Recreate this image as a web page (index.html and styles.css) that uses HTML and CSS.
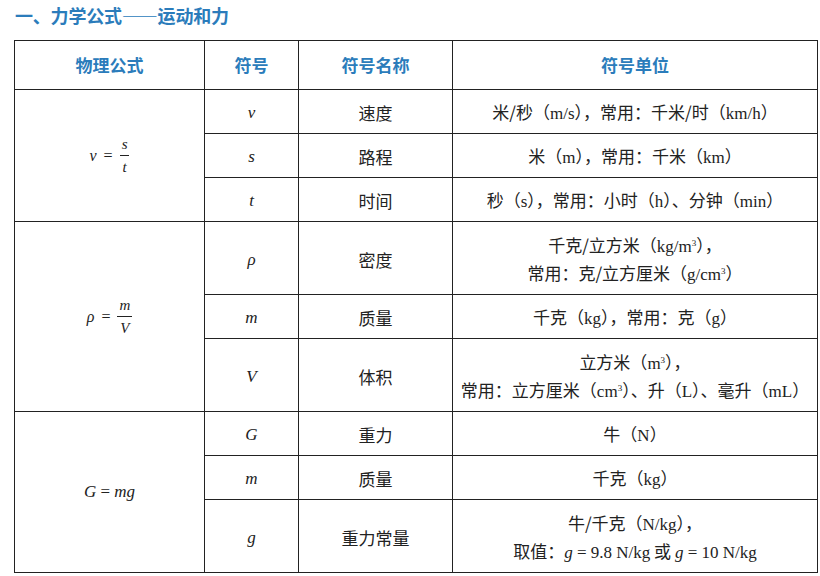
FILE: index.html
```html
<!DOCTYPE html>
<html lang="zh">
<head>
<meta charset="utf-8">
<link rel="stylesheet" href="styles.css">
</head>
<body>
<h1 class="title">一、力学公式——运动和力</h1>
<table class="tbl">
  <colgroup>
    <col class="c1"><col class="c2"><col class="c3"><col class="c4">
  </colgroup>
  <thead>
    <tr class="head">
      <th>物理公式</th><th>符号</th><th>符号名称</th><th>符号单位</th>
    </tr>
  </thead>
  <tbody>
    <tr class="r1">
      <td rowspan="3" class="formula"><span class="eq"><i>v</i><span class="op">=</span><span class="frac"><span class="num"><i>s</i></span><span class="den"><i>t</i></span></span></span></td>
      <td class="sym"><i>v</i></td><td>速度</td><td>米/秒（<span class="la">m/s</span>），常用：千米/时（<span class="la">km/h</span>）</td>
    </tr>
    <tr class="r1"><td class="sym"><i>s</i></td><td>路程</td><td>米（<span class="la">m</span>），常用：千米（<span class="la">km</span>）</td></tr>
    <tr class="r1"><td class="sym"><i>t</i></td><td>时间</td><td>秒（<span class="la">s</span>），常用：小时（<span class="la">h</span>）、分钟（<span class="la">min</span>）</td></tr>

    <tr class="r2">
      <td rowspan="3" class="formula"><span class="eq"><i>ρ</i><span class="op">=</span><span class="frac"><span class="num"><i>m</i></span><span class="den"><i>V</i></span></span></span></td>
      <td class="sym"><i>ρ</i></td><td>密度</td><td class="two">千克/立方米（<span class="la">kg/m<sup>3</sup></span>），<br>常用：克/立方厘米（<span class="la">g/cm<sup>3</sup></span>）</td>
    </tr>
    <tr class="r1"><td class="sym"><i>m</i></td><td>质量</td><td>千克（<span class="la">kg</span>），常用：克（<span class="la">g</span>）</td></tr>
    <tr class="r2"><td class="sym"><i>V</i></td><td>体积</td><td class="two">立方米（<span class="la">m<sup>3</sup></span>），<br>常用：立方厘米（<span class="la">cm<sup>3</sup></span>）、升（<span class="la">L</span>）、毫升（<span class="la">mL</span>）</td></tr>

    <tr class="r1">
      <td rowspan="3" class="formula"><span class="eq2"><i>G</i> = <i>mg</i></span></td>
      <td class="sym"><i>G</i></td><td>重力</td><td>牛（<span class="la">N</span>）</td>
    </tr>
    <tr class="r1"><td class="sym"><i>m</i></td><td>质量</td><td>千克（<span class="la">kg</span>）</td></tr>
    <tr class="r2"><td class="sym"><i>g</i></td><td>重力常量</td><td class="two">牛/千克（<span class="la">N/kg</span>），<br>取值：<span class="la"><i>g</i> = 9.8 N/kg</span> 或 <span class="la"><i>g</i> = 10 N/kg</span></td></tr>
  </tbody>
</table>
</body>
</html>
```

FILE: styles.css
```css
html, body {
  margin: 0;
  padding: 0;
  background: #ffffff;
}
body {
  padding: 4px 0 0 14px;
  font-family: "Noto Sans CJK SC", sans-serif;
  color: #222222;
}
.title {
  margin: 0 0 14px 1px;
  font-family: "Noto Sans CJK SC", sans-serif;
  font-size: 18px;
  line-height: 22px;
  font-weight: 700;
  color: #2b7cbb;
  letter-spacing: -0.2px;
}
.tbl {
  border-collapse: collapse;
  table-layout: fixed;
  width: 803px;
}
.c1 { width: 190px; }
.c2 { width: 94px; }
.c3 { width: 154px; }
.c4 { width: 365px; }
.tbl th, .tbl td {
  border: 1.5px solid #222222;
  text-align: center;
  vertical-align: middle;
  padding: 0;
}
.tbl th {
  font-family: "Noto Sans CJK SC", sans-serif;
  font-weight: 700;
  font-size: 17px;
  color: #2b7cbb;
  padding-bottom: 2px;
}
.head { height: 49px; }
.r1 { height: 44px; }
.r2 { height: 73px; }
.tbl td {
  font-size: 17px;
  line-height: 26px;
  padding-top: 3px;
}
.la, .sym, .formula, .eq, .eq2, .frac {
  font-family: "Liberation Serif", "Times New Roman", serif;
}
.la {
  font-size: 17px;
}
.sym i {
  font-size: 17px;
}
sup {
  font-size: 9px;
  vertical-align: 6px;
  line-height: 0;
}
.tbl td.formula { padding-top: 0; }
.eq {
  display: inline-flex;
  align-items: center;
  font-size: 16px;
  gap: 7px;
}
.op { font-size: 16px; }
.frac {
  display: inline-flex;
  flex-direction: column;
  align-items: center;
  font-size: 15px;
  line-height: 20px;
}
.num {
  padding: 0 2px 1px;
  border-bottom: 1px solid #222222;
}
.den { padding-top: 1px; }
.eq2 { font-size: 17px; }
```
